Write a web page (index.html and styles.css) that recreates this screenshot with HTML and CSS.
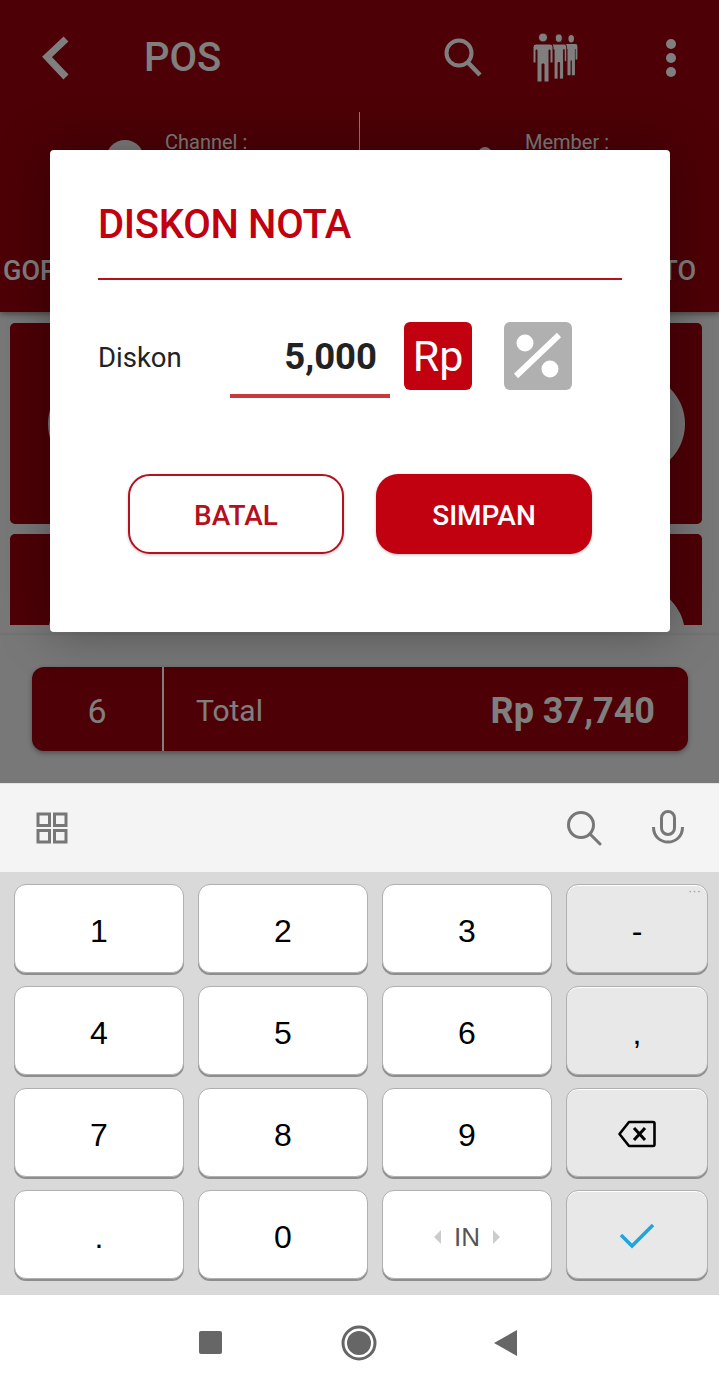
FILE: index.html
```html
<!DOCTYPE html>
<html lang="en">
<head>
  <meta charset="UTF-8">
  <meta name="viewport" content="width=device-width, initial-scale=1.0">
  <title>POS</title>
  <link rel="stylesheet" href="styles.css">
</head>
<body>

  <div class="app">
    <div class="header">
      <div class="topbar">
        <svg class="icon-back" width="30" height="44" viewBox="0 0 30 44"><path d="M25 3 L6 21 L25 41" fill="none" stroke="#fff" stroke-width="7"/></svg>
        <div class="title">POS</div>
        <svg class="icon-search" width="40" height="40" viewBox="0 0 40 40"><circle cx="15" cy="15" r="12.500" fill="none" stroke="#fff" stroke-width="4"/><path d="M23.500 24 L36 37" stroke="#fff" stroke-width="4.500"/></svg>
        <svg class="icon-people" width="48" height="50" viewBox="0 0 48 50">
          <defs>
            <g id="person">
              <circle cx="10" cy="4.5" r="4.5"/>
              <path d="M3 11 H17 Q20 11 20 14 V30 H17 V17 H16 V49 H11 V31 H9 V49 H4 V17 H3 V30 H0 V14 Q0 11 3 11 Z"/>
            </g>
          </defs>
          <use href="#person" fill="#fff" transform="translate(33 2) scale(.62 .82)"/>
          <use href="#person" fill="#fff" stroke="#9a000c" transform="translate(19 1) scale(.78 .92)"/>
          <use href="#person" fill="#fff" stroke="#9a000c" transform="translate(1 0)"/>
        </svg>
        <div class="dots"><span></span><span></span><span></span></div>
      </div>
      <div class="info">
        <div class="info-cell channel">
          <div class="avatar-big"></div>
          <div class="info-label">Channel :</div>
        </div>
        <div class="info-cell member">
          <div class="avatar-small"></div>
          <div class="info-label">Member :</div>
        </div>
      </div>
      <div class="tabs">
        <span>GOPAY</span>
        <span>FOTO</span>
      </div>
    </div>

    <div class="list">
      <div class="list-inner">
        <div class="card card-left"><div class="circle"></div></div>
        <div class="card card-right"><div class="circle"></div></div>
        <div class="card card-left"><div class="circle"></div></div>
        <div class="card card-right"><div class="circle"></div></div>
      </div>
    </div>

    <div class="footer">
      <div class="total-bar">
        <div class="total-count">6</div>
        <div class="total-label">Total</div>
        <div class="total-value">Rp 37,740</div>
      </div>
    </div>

    <div class="scrim"></div>

    <div class="dialog">
      <h2 class="dialog-title">DISKON NOTA</h2>
      <div class="discount-row">
        <label class="discount-label">Diskon</label>
        <div class="discount-input">5,000</div>
        <div class="unit-button unit-active">Rp</div>
        <div class="unit-button unit-off">
          <svg width="68" height="68" viewBox="0 0 68 68">
            <circle cx="21" cy="21" r="8.5" fill="#fff"/>
            <circle cx="46" cy="47" r="8.5" fill="#fff"/>
            <path d="M12 54 L55 13" stroke="#fff" stroke-width="6"/>
          </svg>
        </div>
      </div>
      <div class="dialog-actions">
        <button class="btn btn-outline">BATAL</button>
        <button class="btn btn-fill">SIMPAN</button>
      </div>
    </div>
  </div>

  <div class="keyboard">
    <div class="kb-strip">
      <svg width="32" height="32" viewBox="0 0 32 32" fill="none" stroke="#777" stroke-width="3">
        <rect x="2" y="2" width="11.5" height="11.5"/><rect x="18.5" y="2" width="11.5" height="11.5"/>
        <rect x="2" y="18.5" width="11.5" height="11.5"/><rect x="18.5" y="18.5" width="11.5" height="11.5"/>
      </svg>
      <svg class="kb-search" width="36" height="36" viewBox="0 0 36 36" fill="none" stroke="#777" stroke-width="3">
        <circle cx="15" cy="15" r="12.5"/><path d="M24 24 L34 34" stroke-linecap="round"/>
      </svg>
      <svg class="kb-mic" width="32" height="36" viewBox="0 0 32 36" fill="none" stroke="#777" stroke-width="3">
        <rect x="9.5" y="1.5" width="13" height="23" rx="6.5"/>
        <path d="M1.5 17 C1.500 37 30.500 37 30.500 17"/>
      </svg>
    </div>
    <div class="kb-keys">
      <div class="key">1</div><div class="key">2</div><div class="key">3</div>
      <div class="key key-fn">-<span class="key-more">&middot;&middot;&middot;</span></div>
      <div class="key">4</div><div class="key">5</div><div class="key">6</div>
      <div class="key key-fn">,</div>
      <div class="key">7</div><div class="key">8</div><div class="key">9</div>
      <div class="key key-fn key-icon">
        <svg width="38" height="28" viewBox="0 0 38 28" fill="none" stroke="#000" stroke-width="2.600" stroke-linejoin="round">
          <path d="M11 2 H35 Q36.500 2 36.500 3.500 V24.500 Q36.500 26 35 26 H11 L1.500 14 Z"/>
          <path d="M16 8 L27 20 M27 8 L16 20" stroke-width="3"/>
        </svg>
      </div>
      <div class="key">.</div><div class="key">0</div>
      <div class="key key-lang">
        <svg width="8" height="14" viewBox="0 0 8 14"><path d="M7 0 V14 L0 7 Z" fill="#ccc"/></svg>
        <span>IN</span>
        <svg width="8" height="14" viewBox="0 0 8 14"><path d="M1 0 V14 L8 7 Z" fill="#ccc"/></svg>
      </div>
      <div class="key key-fn key-icon">
        <svg width="36" height="26" viewBox="0 0 36 26" fill="none" stroke="#1ea5e0" stroke-width="3.500"><path d="M2 12 L13 23 L34 2"/></svg>
      </div>
    </div>
  </div>

  <div class="navbar">
    <div class="nav-square"></div>
    <svg width="36" height="36" viewBox="0 0 36 36"><circle cx="18" cy="18" r="16" fill="none" stroke="#666" stroke-width="3"/><circle cx="18" cy="18" r="12" fill="#666"/></svg>
    <svg class="nav-back" width="24" height="26" viewBox="0 0 24 26"><path d="M0 13 L23 0 V26 Z" fill="#666"/></svg>
  </div>

</body>
</html>
```

FILE: styles.css
```css
* {
  box-sizing: border-box;
}
body {
  font-family: 'Roboto', sans-serif;
  margin: 0;
  width: 719px;
  height: 1389px;
  overflow: hidden;
  background-color: white;
}
.app {
  position: relative;
  height: 783px;
  overflow: hidden;
  background-color: #f0f0f0;
}
.scrim {
  position: absolute;
  inset: 0;
  z-index: 2;
  background-color: rgba(0, 0, 0, 0.5);
}

/* header */
.header {
  position: relative;
  z-index: 1;
  height: 312px;
  background-color: #9a000c;
  color: white;
  box-shadow: 0 2px 6px rgba(0, 0, 0, 0.4);
}
.topbar {
  display: flex;
  align-items: center;
  height: 112px;
  padding: 3px 0 0 41px;
}
.title {
  font-size: 40px;
  font-weight: 500;
  margin-left: 73px;
}
.icon-search {
  margin-left: 223px;
}
.icon-people {
  margin-left: 48px;
}
.dots {
  display: flex;
  flex-direction: column;
  gap: 4px;
  margin-left: 86px;
}
.dots span {
  width: 10px;
  height: 10px;
  border-radius: 50%;
  background-color: white;
}
.info {
  display: flex;
  height: 118px;
}
.info-cell {
  display: flex;
  width: 360px;
  padding-top: 18px;
}
.channel {
  padding-left: 106px;
  border-right: 1px solid white;
  width: 361px;
  gap: 21px;
}
.member {
  padding-left: 118px;
  gap: 33px;
}
.info-label {
  font-size: 20px;
}
.avatar-big {
  width: 38px;
  height: 38px;
  margin-top: 10px;
  border-radius: 50%;
  background-color: white;
}
.avatar-small {
  width: 14px;
  height: 14px;
  margin-top: 17px;
  border-radius: 50%;
  background-color: white;
}
.tabs {
  display: flex;
  justify-content: space-between;
  align-items: center;
  height: 82px;
  padding: 0 23px 0 3px;
  font-size: 27px;
  font-weight: 500;
}

/* product cards */
.list {
  height: 323px;
  padding: 11px 17px 10px 10px;
}
.list-inner {
  display: grid;
  grid-template-columns: 1fr 1fr;
  grid-auto-rows: 201px;
  gap: 10px;
  height: 100%;
  overflow: hidden;
}
.card {
  display: flex;
  padding-top: 51px;
  background-color: #9a000c;
  border-radius: 5px;
}
.card-left {
  padding-left: 38px;
}
.card-right {
  justify-content: flex-end;
  padding-right: 17px;
}
.circle {
  width: 100px;
  height: 100px;
  border-radius: 50%;
  background-color: #f0f0f0;
}
.footer {
  position: relative;
  height: 148px;
  padding: 32px 31px 0 32px;
  background-color: #f0f0f0;
  box-shadow: 0 -1px 3px rgba(0, 0, 0, 0.08);
}
.total-bar {
  display: flex;
  align-items: center;
  height: 84px;
  background-color: #9a000c;
  color: white;
  border-radius: 12px;
  box-shadow: 0 2px 5px rgba(0, 0, 0, 0.35);
}
.total-count {
  display: flex;
  align-items: center;
  justify-content: center;
  width: 132px;
  height: 100%;
  padding-top: 3px;
  font-size: 34px;
  border-right: 2px solid white;
}
.total-label {
  margin: 2px 0 0 32px;
  font-size: 30px;
}
.total-value {
  margin: 4px 0 0 auto;
  padding-right: 33px;
  font-size: 36px;
  font-weight: 700;
}

/* dialog */
.dialog {
  position: absolute;
  left: 50px;
  top: 150px;
  z-index: 3;
  width: 620px;
  height: 482px;
  padding: 0 48px;
  background: white;
  border-radius: 4px;
  box-shadow: 0 0 50px rgba(0, 0, 0, 0.35);
}
.dialog-title {
  height: 130px;
  margin: 0;
  padding-top: 51px;
  font-size: 40px;
  font-weight: 500;
  line-height: 48px;
  letter-spacing: -0.3px;
  color: #c10010;
  border-bottom: 2px solid #b4101e;
}
.discount-row {
  display: flex;
  align-items: flex-start;
  margin-top: 42px;
}
.discount-label {
  width: 132px;
  padding-top: 20px;
  font-size: 27.5px;
  line-height: 32px;
  color: #222;
}
.discount-input {
  width: 160px;
  height: 76px;
  padding: 13px 13px 0 0;
  font-size: 36.5px;
  font-weight: 700;
  line-height: 44px;
  text-align: right;
  color: #222;
  border-bottom: 4px solid #c8383c;
}
.unit-button {
  display: flex;
  align-items: center;
  justify-content: center;
  width: 68px;
  height: 68px;
  border-radius: 6px;
}
.unit-active {
  margin-left: 14px;
  font-size: 43px;
  color: white;
  background-color: #c10010;
}
.unit-off {
  margin-left: 32px;
  background-color: #b0b0b0;
}
.dialog-actions {
  display: flex;
  justify-content: center;
  gap: 32px;
  margin-top: 76px;
}
.btn {
  width: 216px;
  height: 80px;
  padding-top: 3px;
  font-family: inherit;
  font-size: 28px;
  font-weight: 500;
  border-radius: 22px;
  box-shadow: 0 1px 3px rgba(0, 0, 0, 0.25);
}
.btn-outline {
  background: white;
  color: #b4101e;
  border: 2px solid #b4101e;
}
.btn-fill {
  background-color: #c10010;
  color: white;
  border: none;
}

/* keyboard */
.keyboard {
  height: 512px;
  background-color: #d9d9d9;
  font-family: 'Liberation Sans', sans-serif;
}
.kb-strip {
  display: flex;
  align-items: center;
  height: 89px;
  padding: 0 35px 0 36px;
  background-color: #f4f4f4;
  border-top: 1px solid #e2e2e2;
}
.kb-search {
  margin-left: auto;
}
.kb-mic {
  margin-left: 50px;
}
.kb-keys {
  display: grid;
  grid-template-columns: 170px 170px 170px 142px;
  grid-auto-rows: 89px;
  column-gap: 14px;
  row-gap: 13px;
  padding: 12px 0 0 14px;
}
.key {
  position: relative;
  display: flex;
  align-items: center;
  justify-content: center;
  padding-top: 5px;
  font-size: 32px;
  color: black;
  background-color: white;
  border: 1px solid #b0b0b0;
  border-radius: 12px;
  box-shadow: 0 2px 0 #8e8e8e;
}
.key-fn {
  background-color: #e8e8e8;
  box-shadow: 0 2px 0 #8e8e8e, inset 0 1px 0 white;
}
.key-icon {
  padding-top: 2px;
}
.key-more {
  position: absolute;
  top: -2px;
  right: 6px;
  font-size: 13px;
  line-height: 16px;
  color: #999;
}
.key-lang {
  gap: 12px;
  font-size: 26px;
  color: #555;
}
.navbar {
  display: flex;
  align-items: center;
  justify-content: center;
  gap: 119px;
  height: 94px;
  padding: 1px 2px 0 0;
  background-color: white;
}
.nav-square {
  width: 23px;
  height: 23px;
  background-color: #666;
  border-radius: 2px;
}
.nav-back {
  margin-left: -2px;
}
```
